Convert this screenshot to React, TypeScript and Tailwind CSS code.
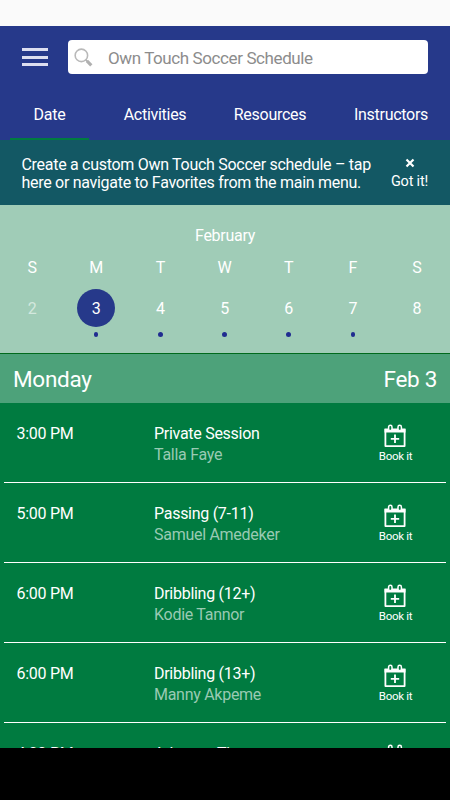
import React, { useState } from 'react'

interface Session {
  time: string
  name: string
  instructor: string
}

const tabs = [
  { label: 'Date', className: 'w-[79px] ml-[10px]' },
  { label: 'Activities', className: 'w-[100px] ml-[16px]' },
  { label: 'Resources', className: 'w-[100px] ml-[15px]' },
  { label: 'Instructors', className: 'w-[100px] ml-[21px]' },
]

const days = [
  { letter: 'S', date: 2, hasEvents: false, past: true },
  { letter: 'M', date: 3, hasEvents: true, past: false },
  { letter: 'T', date: 4, hasEvents: true, past: false },
  { letter: 'W', date: 5, hasEvents: true, past: false },
  { letter: 'T', date: 6, hasEvents: true, past: false },
  { letter: 'F', date: 7, hasEvents: true, past: false },
  { letter: 'S', date: 8, hasEvents: false, past: false },
]

const sessions: Session[] = [
  { time: '3:00 PM', name: 'Private Session', instructor: 'Talla Faye' },
  { time: '5:00 PM', name: 'Passing (7-11)', instructor: 'Samuel Amedeker' },
  { time: '6:00 PM', name: 'Dribbling (12+)', instructor: 'Kodie Tannor' },
  { time: '6:00 PM', name: 'Dribbling (13+)', instructor: 'Manny Akpeme' },
  { time: '4:00 PM', name: 'Advance Three', instructor: '' },
]

function SearchIcon() {
  return (
    <svg width="19" height="19" viewBox="0 0 18 18" fill="none" className="shrink-0">
      <circle cx="7" cy="7" r="5.9" stroke="#b9b9b9" strokeWidth="1.5" />
      <path d="M11.2 11.2l1.8 1.8" stroke="#b0b0b0" strokeWidth="1.5" />
      <path d="M12.2 12.2l4.2 4.2" stroke="#b0b0b0" strokeWidth="3" />
    </svg>
  )
}

function CalendarPlusIcon() {
  return (
    <svg width="22" height="24" viewBox="0 0 22 24" fill="none">
      <path d="M.5 4.5h21v4H.5z" fill="#fff" />
      <path d="M1.4 5v17.1h19.2V5" stroke="#fff" strokeWidth="1.8" strokeLinejoin="round" />
      <rect x="4.6" y="1.2" width="3.4" height="5.4" rx="1.7" fill="#007b40" stroke="#fff" strokeWidth="1.5" />
      <rect x="14" y="1.2" width="3.4" height="5.4" rx="1.7" fill="#007b40" stroke="#fff" strokeWidth="1.5" />
      <path d="M11 10.6v8.4M6.8 14.8h8.4" stroke="#fff" strokeWidth="1.8" />
    </svg>
  )
}

function SessionRow({ session }: { session: Session }) {
  return (
    <div className="mx-1 flex h-20 shrink-0 border-b border-white pt-[21px]">
      <div className="w-[150px] pl-[12.5px] text-[16px] leading-5 tracking-[-0.28px]">{session.time}</div>
      <div className="flex-1 text-[16px] tracking-[-0.28px]">
        <div className="leading-5">{session.name}</div>
        <div className="leading-[22px] text-[#99cab3]">{session.instructor}</div>
      </div>
      <button className="mr-[26px] flex w-[50px] flex-col items-center text-[11.5px] leading-[14px] tracking-[-0.3px]">
        <CalendarPlusIcon />
        <span className="mt-px pl-px">Book it</span>
      </button>
    </div>
  )
}

export default function App() {
  const [activeTab, setActiveTab] = useState('Date')
  const [selected, setSelected] = useState(3)
  const [showTip, setShowTip] = useState(true)

  return (
    <div className="flex h-[800px] w-[450px] flex-col overflow-hidden bg-black font-[Roboto,sans-serif] text-white">
      <div className="h-[26px] shrink-0 bg-[#fafafa]" />

      {/* Header */}
      <header className="flex h-[114px] shrink-0 flex-col bg-[#26398a]">
        <div className="flex pt-[14px]">
          <button className="mt-[8px] ml-[22px] flex h-[18px] w-[26px] flex-col justify-between" aria-label="Menu">
            <span className="h-[3px] w-full bg-[#dcdef0]" />
            <span className="h-[3px] w-full bg-[#dcdef0]" />
            <span className="h-[3px] w-full bg-[#dcdef0]" />
          </button>
          <div className="ml-[20px] flex h-[34px] w-[360px] items-center rounded-[4px] bg-white pl-[6px]">
            <SearchIcon />
            <span className="ml-[15px] pt-[3px] text-[17px] tracking-[-0.4px] text-[#8c8c8c]">
              Own Touch Soccer Schedule
            </span>
          </div>
        </div>
        <nav className="mt-auto flex">
          {tabs.map((tab) => (
            <button
              key={tab.label}
              onClick={() => setActiveTab(tab.label)}
              className={`h-[39px] border-b-2 pb-[10px] text-[16px] leading-5 tracking-[-0.28px] ${tab.className} ${
                activeTab === tab.label ? 'border-[#007b40]' : 'border-transparent'
              }`}
            >
              {tab.label}
            </button>
          ))}
        </nav>
      </header>

      {/* Favorites tip */}
      {showTip && (
        <div className="flex h-[65px] shrink-0 bg-[#135864] pt-[16px]">
          <p className="w-[369px] pl-[21.5px] text-[16px] leading-[18px] tracking-[-0.29px] whitespace-nowrap">
            Create a custom Own Touch Soccer schedule – tap
            <br />
            here or navigate to Favorites from the main menu.
          </p>
          <button
            onClick={() => setShowTip(false)}
            className="ml-[11px] flex w-[59px] flex-col items-center text-[14.5px] leading-[18px] tracking-[-0.2px]"
          >
            <svg width="10" height="10" viewBox="0 0 10 10" className="mt-[2px] mb-[5px]">
              <path d="M1.5 1.5l7 7M8.5 1.5l-7 7" stroke="#fff" strokeWidth="2.2" />
            </svg>
            Got it!
          </button>
        </div>
      )}

      {/* Week picker */}
      <section className="h-[148px] shrink-0 bg-[#a0ccb7] pt-[21px] text-[16px] tracking-[-0.28px]">
        <div className="text-center leading-5">February</div>
        <div className="mt-[12px] grid w-[449px] grid-cols-7">
          {days.map((day) => (
            <button key={day.date} onClick={() => setSelected(day.date)} className="flex flex-col items-center">
              <span className="leading-5">{day.letter}</span>
              <span
                className={`mt-[11px] flex size-[38px] items-center justify-center rounded-full pt-px ${
                  selected === day.date ? 'bg-[#26398a]' : ''
                } ${day.past ? 'text-[#d3e8de]' : ''}`}
              >
                {day.date}
              </span>
              {day.hasEvents && <span className="mt-[5px] size-[4.5px] rounded-full bg-[#202c90]" />}
            </button>
          ))}
        </div>
      </section>

      <div className="flex h-[50px] shrink-0 items-center justify-between border-t border-[#006a1c] bg-[#4da27a] px-[13px] pt-[3px] text-[22.5px] tracking-[-0.3px]">
        <span>Monday</span>
        <span>Feb 3</span>
      </div>

      {/* Sessions */}
      <main className="flex h-[345px] shrink-0 flex-col overflow-hidden bg-[#007b40]">
        {sessions.map((session, i) => (
          <SessionRow key={i} session={session} />
        ))}
      </main>
    </div>
  )
}
